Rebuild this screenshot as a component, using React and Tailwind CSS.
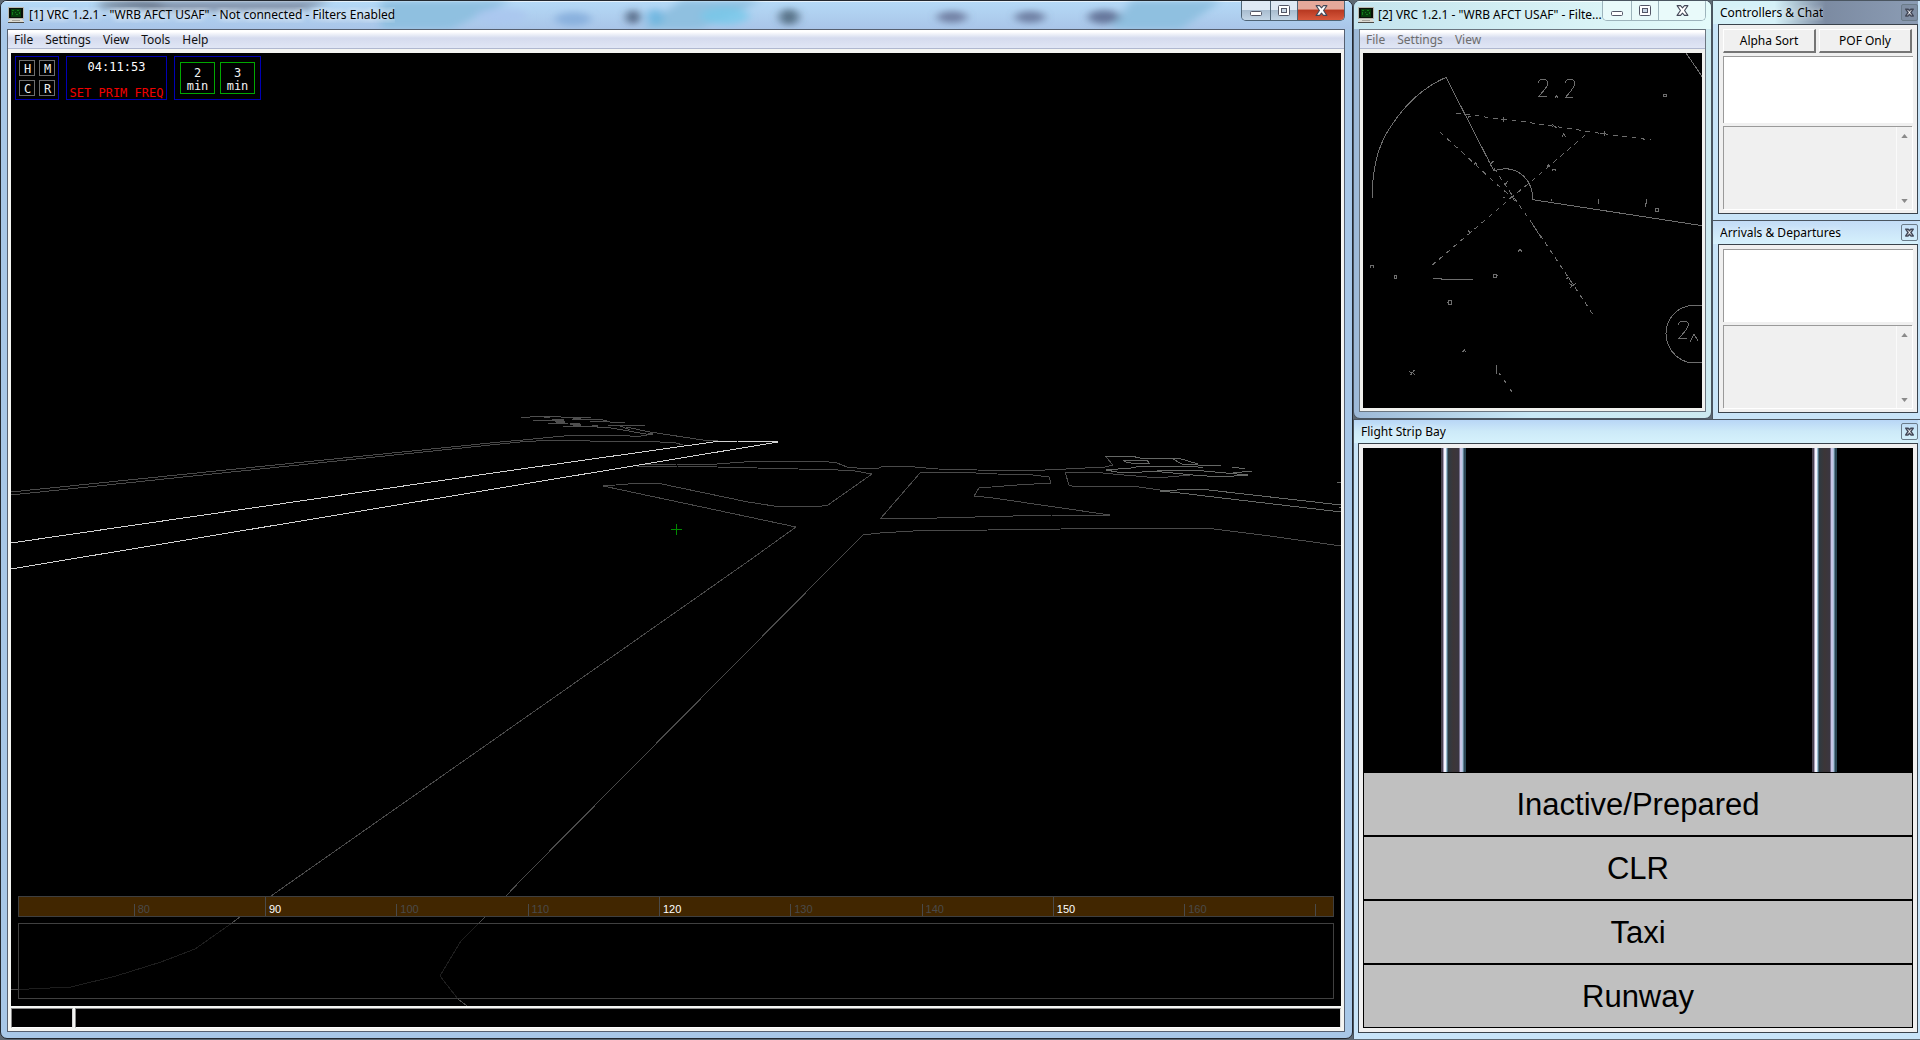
import React from "react";

const UI = "font-['Noto_Sans','Open_Sans',sans-serif]";
const MONO = "font-['DejaVu_Sans_Mono','Liberation_Mono',monospace]";

function AppIcon() {
  return (
    <svg width="16" height="16" viewBox="0 0 16 16" shapeRendering="crispEdges" className="shrink-0" aria-hidden="true">
      <rect width="16" height="12" fill="#b9b7ae" />
      <rect x="1" y="1" width="14" height="10" fill="#0a0f08" />
      <rect x="3" y="2" width="10" height="8" fill="#063d0a" />
      <path d="M4 3h2v1H4zM4 5h1v3H4zM9 3h2v1H9zM11 5h1v2h-1zM7 5h1v1H7zM8 7h2v1H8z" fill="#157a1a" />
      <path d="M2 12h12v1h1v1h1v2H0v-2h1v-1h1z" fill="#dcdad2" />
      <path d="M0 15h16v1H0z" fill="#4b4a46" />
      <path d="M4 13h8v1H4z" fill="#a5a39c" />
    </svg>
  );
}

function MinIcon() {
  return (
    <svg width="14" height="13" viewBox="0 0 14 13" aria-hidden="true">
      <rect x="1.5" y="7.5" width="11" height="4" rx="1" fill="#fff" stroke="#535666" />
    </svg>
  );
}

function MaxIcon() {
  return (
    <svg width="12" height="12" viewBox="0 0 12 12" aria-hidden="true">
      <rect x="0.5" y="0.5" width="11" height="10" rx="1" fill="#fff" stroke="#535666" />
      <rect x="3.5" y="3.5" width="5" height="4" fill="#c8d6e4" stroke="#535666" />
    </svg>
  );
}

function CloseIcon({ size = 12, weight = 1 }) {
  return (
    <svg width={size} height={size} viewBox="0 0 12 12" aria-hidden="true">
      <path
        d="M1 1.500h3.200L6 3.600l1.800-2.100H11L7.900 6l3.100 4.500H7.800L6 8.400 4.200 10.500H1L4.100 6z"
        fill="#fff"
        stroke="#434858"
        strokeWidth={weight}
        strokeLinejoin="round"
      />
    </svg>
  );
}

function CaptionButtons({ active }) {
  const face = active
    ? "bg-linear-to-b from-[#dfe9f4] from-45% via-[#a9bdd0] via-50% to-[#c4d6e6]"
    : "bg-[#e9fafa]";
  const closeFace = active
    ? "bg-linear-to-b from-[#e5a99b] from-40% via-[#b93a22] via-50% to-[#d8583c]"
    : "bg-[#e9fafa]";
  const edge = active ? "border-[#4f6476]" : "border-[#9db4bc]";
  return (
    <div className={`flex h-5 shrink-0 self-start overflow-hidden rounded-b-[5px] border border-t-0 ${edge}`}>
      <button type="button" aria-label="Minimize" className={`flex w-7 items-center justify-center ${face}`}>
        <MinIcon />
      </button>
      <button type="button" aria-label="Maximize" className={`flex w-7 items-center justify-center border-x ${edge} ${face}`}>
        <MaxIcon />
      </button>
      <button type="button" aria-label="Close" className={`flex w-[46px] items-center justify-center ${closeFace}`}>
        <CloseIcon size={13} />
      </button>
    </div>
  );
}

function MenuBar({ items, disabled }) {
  return (
    <nav className="flex h-[19px] shrink-0 items-center gap-3 border-b border-[#b0b8d0] bg-linear-to-b from-white from-10% via-[#d5dbee] via-45% to-[#e0e6f5] px-1.5 pt-0.5">
      {items.map((label) => (
        <button
          key={label}
          type="button"
          disabled={disabled}
          className={`text-xs leading-4 ${disabled ? "text-[#6d6d6d]" : "text-[#111]"}`}
        >
          {label}
        </button>
      ))}
    </nav>
  );
}

function Reflections() {
  const spots = [
    [130, 4, 34, 4, "#5b6474"],
    [500, 15, 26, 8, "#a9c6ef"],
    [572, 18, 18, 7, "#7fa8d8"],
    [632, 16, 7, 7, "#3b4a66"],
    [654, 16, 8, 8, "#5fb2dd"],
    [724, 15, 24, 9, "#74c8ea"],
    [788, 16, 10, 8, "#3c566a"],
    [951, 16, 15, 6, "#5f6a8e"],
    [1029, 16, 15, 6, "#5b678c"],
    [1103, 16, 16, 7, "#4f5b82"],
  ];
  return (
    <svg className="absolute inset-0 h-full w-full" viewBox="0 0 1351 28" preserveAspectRatio="none" aria-hidden="true">
      <defs>
        <filter id="soft" x="-50%" y="-100%" width="200%" height="300%">
          <feGaussianBlur stdDeviation="5 3" />
        </filter>
      </defs>
      <g filter="url(#soft)">
        <path d="M120 0H330L300 10H150z" fill="#8494ac" />
        <path d="M380 0h130l-60 28h-70zM680 0h80l-60 28h-60zM1130 0h90l-40 28h-70z" fill="#8fc0e0" />
        {spots.map(([x, y, rx, ry, fill]) => (
          <ellipse key={x} cx={x} cy={y} rx={rx} ry={ry} fill={fill} opacity="0.75" />
        ))}
      </g>
    </svg>
  );
}

const dimPaths = [
  "M11 492L500 442L523 440L553 437L576 435H625L630 436H641L652 434",
  "M11 495L500 444L520 442L553 440H583L590 441H646L660 442L676 443L683 445",
  "M650 432L703 440H718",
  "M643 465L677 464H717L757 461H821L837 463L847 467L857 468H879L883 466H903L938 469L977 470L1015 471L1045 470L1066 469L1105 467L1113 465L1106 457",
  "M637 466H677L717 467L757 468L798 469L838 470L855 471L872 474L828 505L822 506H774L748 502L657 483H641L603 486L636 493L796 527L750 560L271 896L240 917L232 923",
  "M1341 546L1270 536L1206 528H1134L1061 529L988 530L913 531L880 533L863 535L838 560L521 880L506 896L485 917L479 923",
  "M881 518L920 473L927 472H955L997 474L1033 475L1049 477L1051 483L1017 485L979 488L974 496L993 498L1110 515H1052L937 518Z",
  "M1160 490L1132 486H1107L1075 487L1069 485L1065 472H1093L1113 474L1147 477H1168L1190 475",
  "M11 989H18M458 999L467 1006",
];

const faintPaths = [
  "M232 923L195 949L161 962L116 976L71 987L29 989H18",
  "M479 923L461 941L440 976L458 999",
];

const midPaths = [
  "M1160 491L1177 490L1200 489L1341 505M1160 491L1180 493L1341 512M1337 482H1341M1339 507H1341",
  "M1105 456H1131L1140 458H1178L1198 464H1182L1171 458M1123 460H1147L1149 463H1131L1126 462L1123 460",
  "M1137 466H1193L1203 468M1106 470L1131 468L1142 466M1106 470L1117 472H1142L1172 470H1193L1248 475L1220 477L1193 475L1152 471",
  "M1198 465L1221 466M1232 467L1245 469M1233 473L1252 471",
];

const clusterPaths = [
  "M521 418L540 416H559L561 417H591M533 420H550L565 423M548 423H568M563 426H583L597 427L611 428L652 435",
  "M572 419H600L610 422H625M590 422L608 421M608 425H645M626 427L650 432M618 425L630 430",
];

function TowerView() {
  return (
    <svg
      className="absolute inset-0 h-full w-full"
      viewBox="11 53 1330 953"
      preserveAspectRatio="xMinYMin slice"
      fill="none"
      shapeRendering="crispEdges"
      role="img"
      aria-label="Airfield view"
    >
      {dimPaths.map((d) => (
        <path key={d} d={d} stroke="#4a4a4a" />
      ))}
      {faintPaths.map((d) => (
        <path key={d} d={d} stroke="#1e1e1e" />
      ))}
      {clusterPaths.map((d) => (
        <path key={d} d={d} stroke="#4f4f4f" />
      ))}
      <path d="M544 417h6M552 420h12M556 422h9M570 424h10M573 425h8M573 418h8M592 426h6M648 434h5" stroke="#4f4f4f" strokeWidth="2" />
      {midPaths.map((d) => (
        <path key={d} d={d} stroke="#666866" />
      ))}
      <path d="M11 543L500 472L720 441H737L778 442L500 488L11 569" stroke="#d2d2d2" />
      <path d="M671 529h11M676 524v11" stroke="#008a00" />
    </svg>
  );
}

function SmallKey({ children }) {
  return (
    <button type="button" className="flex h-4 w-4 items-center justify-center border border-[#6e6e6e] pt-0.5 pl-px text-xs leading-4 text-[#eee]">
      {children}
    </button>
  );
}

function TimerKey({ value }) {
  return (
    <button type="button" className="h-8 w-[35px] border border-[#00a800] pt-1 text-xs leading-[13px] text-[#f2f2f2]">
      {value}
      <br />
      min
    </button>
  );
}

function Toolbox() {
  return (
    <div className={`relative flex items-start gap-[7px] p-1 pt-[3px] ${MONO}`}>
      <div className="grid h-11 w-11 grid-cols-2 place-content-center place-items-center gap-1 border border-[#0000b4] px-[3px]">
        <SmallKey>H</SmallKey>
        <SmallKey>M</SmallKey>
        <SmallKey>C</SmallKey>
        <SmallKey>R</SmallKey>
      </div>
      <div className="flex h-11 w-[101px] flex-col items-center justify-between border border-[#0000b4] pt-1 text-xs leading-3">
        <span className="text-white">04:11:53</span>
        <span className="text-[#f00000]">SET PRIM FREQ</span>
      </div>
      <div className="flex h-11 items-center gap-[5px] border border-[#0000b4] px-[5px]">
        <TimerKey value="2" />
        <TimerKey value="3" />
      </div>
    </div>
  );
}

const headings = [
  { label: "80" },
  { label: "90", major: true },
  { label: "100" },
  { label: "110" },
  { label: "120", major: true },
  { label: "130" },
  { label: "140" },
  { label: "150", major: true },
  { label: "160" },
];

function HeadingTape() {
  return (
    <div className="relative mx-[7px] flex h-[21px] items-end border border-[#3f3f3f] bg-[#412600] font-['Liberation_Sans',sans-serif] text-[11px]">
      <div className="min-w-0 grow-[118] basis-0" />
      {headings.map(({ label, major }) => (
        <div
          key={label}
          className={`min-w-0 grow-[131] basis-0 border-l border-[#4a4a4a] pl-[3px] ${
            major ? "h-full pt-[5px] leading-[14px] text-white" : "h-3 leading-[10px] text-[#4a4a4a]"
          }`}
        >
          {label}
        </div>
      ))}
      <div className="h-3 min-w-0 grow-[17] basis-0 border-l border-[#4a4a4a]" />
    </div>
  );
}

function MainWindow() {
  return (
    <section className="flex min-w-0 flex-1 flex-col overflow-hidden rounded-[7px] border border-[#23282f] bg-[#a8c8e8]">
      <header className="relative flex h-7 shrink-0 items-center bg-linear-to-b from-[#b5daf7] to-[#a9c5e8] pr-[7px] pl-[7px] shadow-[inset_0_1px_0_#e4f1fb]">
        <Reflections />
        <div className="relative flex min-w-0 flex-1 items-center gap-[5px]">
          <AppIcon />
          <h1 className="truncate text-xs leading-4 text-black [text-shadow:0_0_6px_#fff,0_0_8px_#fff]">
            [1] VRC 1.2.1 - "WRB AFCT USAF" - Not connected - Filters Enabled
          </h1>
        </div>
        <div className="relative self-start">
          <CaptionButtons active />
        </div>
      </header>
      <div className="mr-[7px] mb-1.5 ml-1.5 flex min-h-0 flex-1 flex-col border border-[#566070] bg-[#f4f5f2]">
        <MenuBar items={["File", "Settings", "View", "Tools", "Help"]} />
        <div className="relative mx-[3px] mt-1 flex min-h-0 flex-1 flex-col justify-between overflow-hidden bg-black">
          <TowerView />
          <Toolbox />
          <div className="flex flex-col gap-1.5 pb-[7px]">
            <HeadingTape />
            <div className="relative mx-[7px] h-[76px] border border-[#404040]" />
          </div>
        </div>
        <div className="mx-[3px] mt-0.5 mb-[3px] flex h-5 shrink-0 gap-0.5">
          <output className="w-[62px] border border-[#8a8a8a] border-r-[#d8d8d8] border-b-white bg-black" />
          <input
            type="text"
            aria-label="Command line"
            className={`min-w-0 flex-1 border border-[#8a8a8a] border-r-[#d8d8d8] border-b-white bg-black px-1 text-xs text-white ${MONO}`}
          />
        </div>
      </div>
    </section>
  );
}

function RadarView() {
  return (
    <svg
      className="block h-full w-full"
      viewBox="39 39 1017 1065"
      preserveAspectRatio="xMinYMin slice"
      fill="none"
      stroke="#6e6e6e"
      strokeWidth="3"
      shapeRendering="crispEdges"
      role="img"
      aria-label="Radar view"
    >
      <path d="M68 473V434Q74 330 122 260Q190 155 288 112L432 393Q480 375 517 405Q548 430 548 479L1056 557" />
      <path d="M1008 39L1056 109" />
      <path d="M318 220L345 222L440 236L520 245L620 260L745 279L903 300" strokeDasharray="14 14" />
      <path d="M270 276L445 437L490 475" strokeDasharray="14 15" />
      <path d="M705 286L540 427L484 473L247 675" strokeDasharray="14 14" />
      <path d="M432 385L486 465L545 548L640 690L735 833" strokeDasharray="14 13" />
      <path d="M545 548L574 594" />
      <path d="M565 128Q566 118 578 118Q594 118 593 132Q593 140 566 169H592M645 128Q648 118 660 118Q675 118 674 133Q673 142 646 173H669M615 175L619 166L624 175" />
      <path d="M985 855Q987 843 1000 843Q1016 843 1015 856Q1014 866 986 895H1012M1020 907L1032 882L1044 903" />
      <path d="M1056 797H1018Q974 805 955 846Q941 880 955 915Q974 958 1018 968H1056" />
      <path d="M249 715H273V718H369M745 477V492M889 477V490H886V501M604 477V483M439 976V1001M447 1001L452 1006M463 1022L469 1028M479 1046L486 1055" />
      <rect x="940" y="163" width="9" height="7" />
      <rect x="917" y="506" width="9" height="9" />
      <rect x="133" y="706" width="7" height="9" />
      <path d="M431 702H440V711H431zM440 706H443M294 782H304V792H294zM291 787H294" />
      <path d="M636 290L641 281L647 290M606 394V388H617V394M62 683V677H70V683M504 637L509 628L516 635M337 937L343 929L347 937" />
      <path d="M355 235V228H364M461 231V245M453 239H467M607 254L620 264M763 273V287M750 281H763M371 376L376 368L382 376M590 380L596 374L600 382M416 363L422 372L430 363M420 372V378M461 430H470M466 430L462 436M466 430L474 424" />
      <path d="M355 572L361 578L366 573M361 578L356 581M649 718L655 712L660 718M657 730L668 737L677 730M668 737L661 743M177 994L186 1000L194 989M186 1000L181 1006M188 998L194 1004M460 473H466M478 476L486 470L494 482" />
    </svg>
  );
}

function RadarWindow() {
  return (
    <section className="flex min-w-0 flex-1 flex-col overflow-hidden rounded-[7px] border border-[#4a5560] bg-linear-to-r from-[#9db9d6] via-[#c9e9f6] to-[#cdeaf0]">
      <header className="flex h-7 shrink-0 items-center justify-between bg-linear-to-r from-[#c4e4ee] to-[#e4fbfa] pr-[5px] pl-1 shadow-[inset_0_1px_0_#f4ffff]">
        <div className="flex items-center gap-1">
          <AppIcon />
          <h2 className="text-xs leading-4 whitespace-nowrap text-black">[2] VRC 1.2.1 - "WRB AFCT USAF" - Filte...</h2>
        </div>
        <CaptionButtons />
      </header>
      <div className="mx-[5px] mb-1.5 flex min-h-0 flex-1 flex-col border border-[#6b7680] bg-[#f0f1ee]">
        <MenuBar items={["File", "Settings", "View"]} disabled />
        <div className="mx-[3px] mt-1 mb-[3px] min-h-0 flex-1 overflow-hidden bg-black">
          <RadarView />
        </div>
      </div>
    </section>
  );
}

function ToolPanel({
  title,
  tone = "bg-linear-to-b from-[#c3dcf6] to-[#d6f1fc]",
  closeTone = "",
  edge = "ml-[5px]",
  className = "",
  children,
}) {
  return (
    <section className={`flex min-h-0 flex-col border-t border-l border-[#4a5560] bg-[#c8e4f8] pr-0.5 pb-1.5 ${className}`}>
      <header className={`flex h-[23px] shrink-0 items-center justify-between pl-[7px] ${tone}`}>
        <h2 className="truncate text-xs leading-4 text-black [text-shadow:0_0_6px_#fff]">{title}</h2>
        <button
          type="button"
          aria-label={`Close ${title}`}
          className={`flex h-[17px] w-[17px] items-center justify-center rounded-[2px] border border-[#6b7c8a] ${closeTone}`}
        >
          <CloseIcon size={9} weight={2} />
        </button>
      </header>
      <div className={`flex min-h-0 flex-1 flex-col border border-[#3a434c] bg-[#f0f0f0] p-1 ${edge}`}>{children}</div>
    </section>
  );
}

function PushButton({ children }) {
  return (
    <button
      type="button"
      className="h-6 min-w-0 flex-1 border border-t-white border-r-2 border-r-[#757575] border-b-2 border-b-[#757575] border-l-white bg-[#f0f0f0] text-xs leading-4 text-black"
    >
      {children}
    </button>
  );
}

function ListPane({ label, className }) {
  return <ul aria-label={label} className={`border-t border-l border-[#9a9a9a] bg-white ${className}`} />;
}

function ScrollArrow({ down }) {
  return (
    <button type="button" aria-label={down ? "Scroll down" : "Scroll up"} className="flex h-[17px] items-center justify-center">
      <svg width="7" height="4" viewBox="0 0 8 5" aria-hidden="true">
        <path d={down ? "M0 0h8L4 5z" : "M0 5h8L4 0z"} fill="#8a8a8a" />
      </svg>
    </button>
  );
}

function TextPane({ label }) {
  return (
    <div className="mr-px flex min-h-0 flex-1 border-t border-l border-[#9a9a9a] bg-[#f0f0f0] shadow-[1px_1px_0_#fff]">
      <textarea aria-label={label} disabled className="min-w-0 flex-1 resize-none" />
      <div className="flex w-4 flex-col justify-between border-l border-[#fafafa] bg-[#f0f0f0]">
        <ScrollArrow />
        <ScrollArrow down />
      </div>
    </div>
  );
}

function StripRail() {
  return (
    <div className="flex w-[25px]">
      <div className="w-0.5 bg-[#4a4452]" />
      <div className="w-px bg-[#a9a0ba]" />
      <div className="w-0.5 bg-[#f2f4ff]" />
      <div className="w-px bg-[#9fc0d2]" />
      <div className="w-px bg-[#4f6e80]" />
      <div className="flex-1 bg-linear-to-r from-[#2e3a42] via-[#3c3638] to-[#3a3640]" />
      <div className="w-px bg-[#77708c]" />
      <div className="w-0.5 bg-[#c6c4e4]" />
      <div className="w-px bg-[#a9c0d8]" />
      <div className="w-px bg-[#5f7e92]" />
      <div className="w-0.5 bg-[#2a4654]" />
    </div>
  );
}

function FlightStripBay() {
  return (
    <ToolPanel
      title="Flight Strip Bay"
      className="flex-1"
      edge="ml-1"
      tone="bg-linear-to-b from-[#b8d6f6] via-[#cdeaf8] to-[#d6f2fc]"
    >
      <div className="flex min-h-0 flex-1 flex-col bg-black px-px pb-px">
        <div className="flex min-h-0 flex-1 justify-between pr-[75px] pb-px pl-[77px]">
          <StripRail />
          <StripRail />
        </div>
        <ul className="flex flex-col gap-0.5">
          {["Inactive/Prepared", "CLR", "Taxi", "Runway"].map((name) => (
            <li
              key={name}
              className="flex h-[62px] items-center justify-center bg-[#c0c0c0] pt-0.5 font-['Liberation_Sans',sans-serif] text-[31px] leading-9 text-black"
            >
              {name}
            </li>
          ))}
        </ul>
      </div>
    </ToolPanel>
  );
}

export default function App() {
  return (
    <main className={`flex h-screen min-h-[600px] overflow-hidden bg-[#5d6872] pb-px ${UI}`}>
      <MainWindow />
      <div className="flex w-[567px] shrink-0 flex-col">
        <div className="flex h-[419px] shrink-0">
          <RadarWindow />
          <div className="flex w-52 shrink-0 flex-col">
            <ToolPanel
              title="Controllers & Chat"
              className="h-[220px]"
              tone="bg-linear-to-r from-[#d5f1f8] from-30% via-[#7c8ba2] via-55% to-[#8b9cb4]"
              closeTone="bg-[#7f8ea3]"
            >
              <div className="mb-[3px] flex shrink-0 gap-[3px] pr-px">
                <PushButton>Alpha Sort</PushButton>
                <PushButton>POF Only</PushButton>
              </div>
              <ListPane label="Controllers" className="mb-[3px] h-[67px] shrink-0" />
              <TextPane label="Chat" />
            </ToolPanel>
            <ToolPanel title="Arrivals & Departures" className="flex-1">
              <ListPane label="Aircraft" className="mb-[3px] h-[73px] shrink-0" />
              <TextPane label="Aircraft details" />
            </ToolPanel>
          </div>
        </div>
        <FlightStripBay />
      </div>
    </main>
  );
}
